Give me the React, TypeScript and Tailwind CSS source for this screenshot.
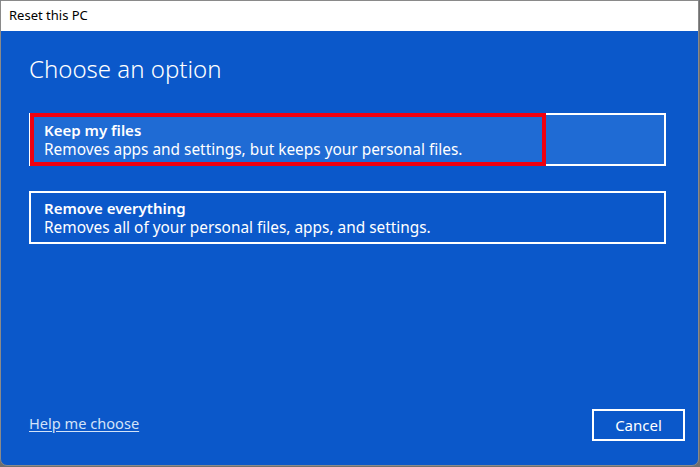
import React from 'react';

const font = { fontFamily: '"Noto Sans", "Open Sans", sans-serif' };

const Option: React.FC<{ title: string; desc: string; selected?: boolean }> = ({ title, desc, selected }) => (
  <div
    className={`relative border-2 border-white px-[13px] pt-[6px] pb-[5px] ${selected ? 'bg-[#1f6bd4]' : 'bg-[#0b58ca]'}`}
  >
    <div className="text-[15px] font-semibold leading-[19px] text-white">{title}</div>
    <div className="text-[15.4px] leading-[19px] text-white">{desc}</div>
    {selected && (
      <div className="pointer-events-none absolute -left-[1px] -top-[2px] -bottom-[2px] w-[516px] border-[4px] border-[#f00010]" />
    )}
  </div>
);

export default function App() {
  return (
    <div className="h-[467px] w-[700px] bg-[#6f6f6f]" style={font}>
      <div className="flex h-[466px] w-[699px] flex-col overflow-hidden rounded-b-[7px] border border-[#8a8a8a] bg-[#0b58ca]">
        <div className="flex h-[30px] items-center bg-white pl-[8px] text-[13px] text-black">Reset this PC</div>
        <div className="flex flex-1 flex-col pl-[28px] pr-[13px] pt-[22px] pb-[24px]">
          <h1 className="text-[24px] font-light leading-[32px] text-white">Choose an option</h1>
          <div className="mt-[28px] flex w-[637px] flex-col gap-[25px]">
            <Option title="Keep my files" desc="Removes apps and settings, but keeps your personal files." selected />
            <Option title="Remove everything" desc="Removes all of your personal files, apps, and settings." />
          </div>
          <div className="mt-auto flex items-end justify-between">
            <a className="mb-[6px] text-[14.6px] text-[#d3e3f8] underline underline-offset-2">Help me choose</a>
            <button className="h-[32px] w-[93px] border-2 border-white text-[15px] text-white">Cancel</button>
          </div>
        </div>
      </div>
    </div>
  );
}
